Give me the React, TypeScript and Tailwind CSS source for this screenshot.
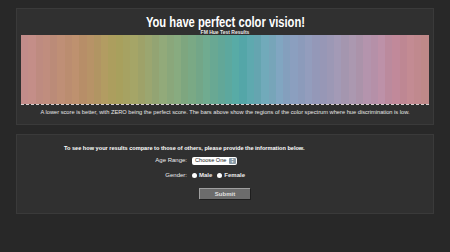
import React from 'react'

const stops: [number, number[]][] = [
  [0, [194, 140, 138]],
  [0.14, [186, 142, 106]],
  [0.23, [170, 160, 92]],
  [0.29, [160, 164, 106]],
  [0.34, [146, 168, 120]],
  [0.41, [124, 168, 130]],
  [0.47, [106, 168, 146]],
  [0.54, [82, 168, 168]],
  [0.6, [112, 168, 184]],
  [0.66, [136, 160, 192]],
  [0.73, [148, 152, 184]],
  [0.81, [168, 152, 176]],
  [0.88, [184, 144, 168]],
  [0.93, [192, 136, 152]],
  [1, [192, 138, 138]],
]

function colorAt(t: number, k: number): string {
  for (let i = 0; i < stops.length - 1; i++) {
    const [a, ca] = stops[i]
    const [b, cb] = stops[i + 1]
    if (t >= a && t <= b) {
      const f = (t - a) / (b - a)
      const c = ca.map((v, n) => Math.max(0, Math.min(255, Math.round((v + (cb[n] - v) * f) * k))))
      return `rgb(${c[0]},${c[1]},${c[2]})`
    }
  }
  return 'rgb(192,138,138)'
}

// slight shade wobble so the bars read as separate columns
const STRIPES = 56
const wobble = [0, 1.5, -1, 0.5, -1.5, 1, -0.5, 2, -1, 0.5, -1, 1.5, 0, -0.5]

const stripes = Array.from({ length: STRIPES }, (_, i) =>
  colorAt(i / (STRIPES - 1), 1 + wobble[i % wobble.length] / 100),
)

export default function App(): JSX.Element {
  return (
    <div className="min-h-screen bg-[#282828] pt-[8px] font-['Liberation_Sans',Arial,sans-serif]">
      <section className="mx-[16px] h-[117px] border border-[#3a3a3a] bg-[#303030] px-[4px] pt-[6px]">
        <div className="flex justify-center">
          <h1 className="scale-x-[0.8] whitespace-nowrap text-[14px] font-bold leading-[14px] text-white">
            You have perfect color vision!
          </h1>
        </div>
        <p className="mt-[1px] text-center text-[5px] font-bold leading-[5px] text-[#e8e8e8]">FM Hue Test Results</p>

        <div className="flex h-[70px] border-b border-dashed border-[#d8d0d0]">
          {stripes.map((c, i) => (
            <div key={i} className="flex-1" style={{ backgroundColor: c }} />
          ))}
        </div>

        <p className="mt-[4px] whitespace-nowrap text-center text-[5.7px] leading-[7px] text-[#e6e6e6]">
          A lower score is better, with ZERO being the perfect score. The bars above show the regions of the color spectrum where hue discrimination is low.
        </p>
      </section>

      <section className="mx-[16px] mt-[9px] h-[80px] border border-[#3a3a3a] bg-[#303030] pt-[10px]">
        <p className="pl-[47px] text-[5.6px] font-bold leading-[7px] text-white">
          To see how your results compare to those of others, please provide the information below.
        </p>

        <div className="mt-[4px] grid grid-cols-[170px_1fr] items-center gap-x-[5px] gap-y-[6px] text-[6px] text-[#eeeeee]">
          <span className="text-right">Age Range:</span>
          <div className="flex">
            <div className="flex h-[8px] w-[45px] items-center justify-between rounded-[2px] bg-white pl-[3px] pr-[1px] text-[5.6px] text-[#222]">
              <span>Choose One</span>
              <span className="flex h-[6px] w-[7px] flex-col items-center justify-center rounded-[1px] bg-[#8a9aa6] text-[3px] leading-[3px] text-white">
                <span>▲</span>
                <span>▼</span>
              </span>
            </div>
          </div>

          <span className="text-right">Gender:</span>
          <div className="flex items-center gap-[2px] font-bold">
            <span className="h-[5px] w-[5px] rounded-full bg-white" />
            <span>Male</span>
            <span className="ml-[3px] h-[5px] w-[5px] rounded-full bg-white" />
            <span>Female</span>
          </div>
        </div>

        <div className="mt-[8px] flex">
          <div className="ml-[182px] flex h-[11px] w-[51px] items-center justify-center border-l border-t border-[#a0a0a0] bg-[#6c6c6c] text-[6px] font-bold text-[#e0e0e0] shadow-[1px_1px_0_#1e1e1e]">
            Submit
          </div>
        </div>
      </section>
    </div>
  )
}
